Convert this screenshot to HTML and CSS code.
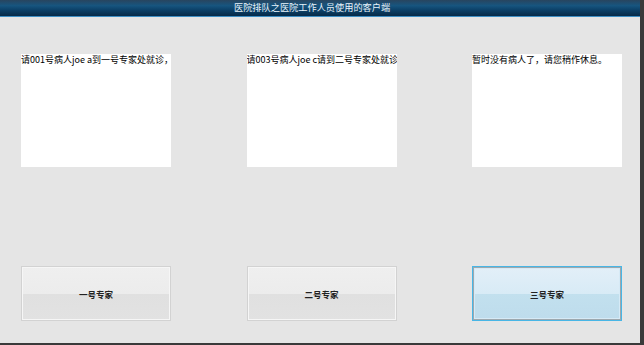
FILE: index.html
```html
<!DOCTYPE html>
<html lang="zh-CN">
<head>
    <meta charset="UTF-8">
    <title>医院排队之医院工作人员使用的客户端</title>
    <link rel="stylesheet" href="styles.css">
</head>
<body>

<div class="window">
    <div class="titlebar">
        <span class="title">医院排队之医院工作人员使用的客户端</span>
    </div>
    <div class="content">
        <div class="screen">请001号病人joe a到一号专家处就诊，</div>
        <div class="screen">请003号病人joe c请到二号专家处就诊</div>
        <div class="screen">暂时没有病人了，请您稍作休息。</div>
        <button class="doctor">一号专家</button>
        <button class="doctor">二号专家</button>
        <button class="doctor active">三号专家</button>
    </div>
</div>

</body>
</html>
```

FILE: styles.css
```css
html, body {
    margin: 0;
    padding: 0;
    background: #e5e5e5;
    font-family: "Noto Sans CJK SC", "DejaVu Sans", sans-serif;
}
.window {
    width: 640px;
    height: 343px;
    border-right: 4px solid #3a3a3a;
    border-bottom: 2px solid #3a3a3a;
    background: #e5e5e5;
    overflow: hidden;
}
.titlebar {
    height: 16px;
    border-bottom: 1px solid #3d8ec4;
    background: linear-gradient(#28455f 0%, #17557f 35%, #0b3f66 65%, #062a48 100%);
    display: flex;
    align-items: center;
    padding-left: 234px;
}
.title {
    color: #e8f2fa;
    font-size: 9.2px;
    line-height: 1;
}
.content {
    display: grid;
    grid-template-columns: repeat(3, 150px);
    grid-template-rows: 112px 55px;
    column-gap: 75.5px;
    row-gap: 99px;
    padding: 38px 0 0 21px;
}
.screen {
    background: #fff;
    font-size: 9px;
    line-height: 11px;
    color: #000;
    white-space: nowrap;
    overflow: hidden;
    margin-top: -1px;
}
.doctor {
    font-family: inherit;
    font-size: 8.5px;
    font-weight: bold;
    color: #222;
    border: 1px solid #d2d2d2;
    box-shadow: inset 0 0 0 1px #f6f6f6;
    background: linear-gradient(#efefef 0%, #ececec 50%, #e0e0e0 51%, #e2e2e2 100%);
    padding: 0;
    cursor: pointer;
}
.doctor.active {
    border: 1px solid #48b6e6;
    box-shadow: inset 0 0 0 1px #9ea8ae, inset 0 0 0 2px #d6eaf6;
    background: linear-gradient(#e3eff8 0%, #d8ebf6 50%, #c2e0ee 51%, #bedcec 100%);
}
```
